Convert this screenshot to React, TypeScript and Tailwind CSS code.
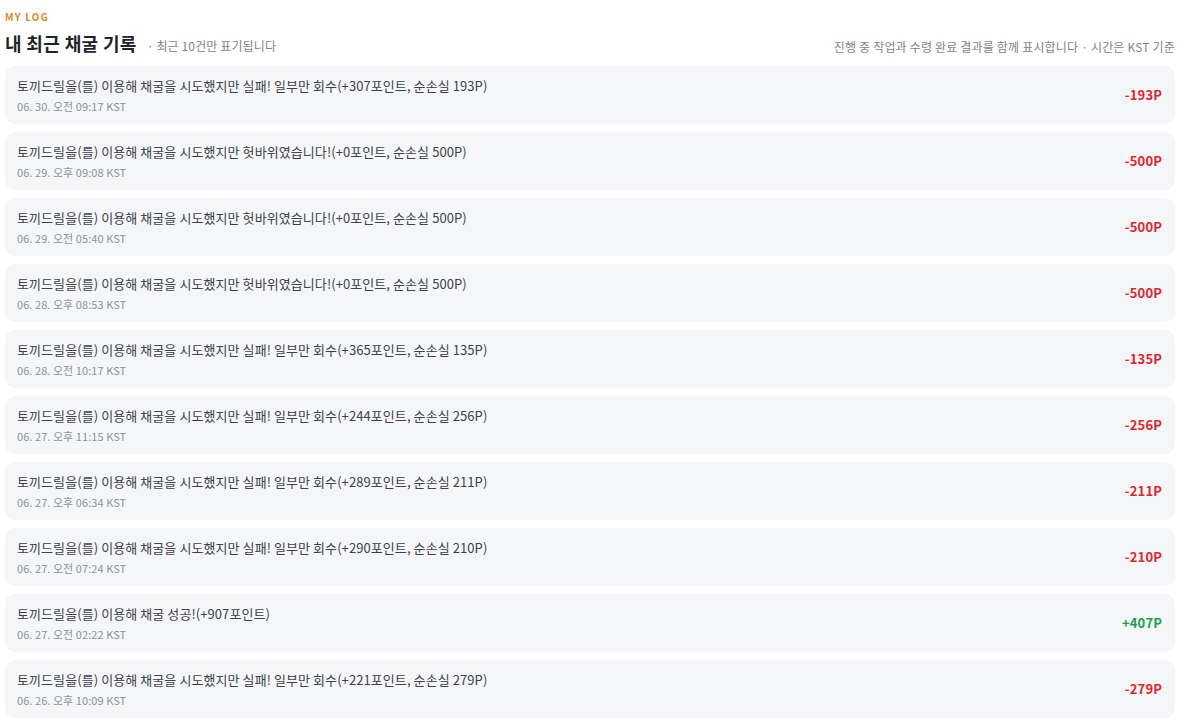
import React from "react";

const rows = [
  { text: "토끼드릴을(를) 이용해 채굴을 시도했지만 실패! 일부만 회수(+307포인트, 순손실 193P)", date: "06. 30. 오전 09:17 KST", amt: "-193P", pos: false },
  { text: "토끼드릴을(를) 이용해 채굴을 시도했지만 헛바위였습니다!(+0포인트, 순손실 500P)", date: "06. 29. 오후 09:08 KST", amt: "-500P", pos: false },
  { text: "토끼드릴을(를) 이용해 채굴을 시도했지만 헛바위였습니다!(+0포인트, 순손실 500P)", date: "06. 29. 오전 05:40 KST", amt: "-500P", pos: false },
  { text: "토끼드릴을(를) 이용해 채굴을 시도했지만 헛바위였습니다!(+0포인트, 순손실 500P)", date: "06. 28. 오후 08:53 KST", amt: "-500P", pos: false },
  { text: "토끼드릴을(를) 이용해 채굴을 시도했지만 실패! 일부만 회수(+365포인트, 순손실 135P)", date: "06. 28. 오전 10:17 KST", amt: "-135P", pos: false },
  { text: "토끼드릴을(를) 이용해 채굴을 시도했지만 실패! 일부만 회수(+244포인트, 순손실 256P)", date: "06. 27. 오후 11:15 KST", amt: "-256P", pos: false },
  { text: "토끼드릴을(를) 이용해 채굴을 시도했지만 실패! 일부만 회수(+289포인트, 순손실 211P)", date: "06. 27. 오후 06:34 KST", amt: "-211P", pos: false },
  { text: "토끼드릴을(를) 이용해 채굴을 시도했지만 실패! 일부만 회수(+290포인트, 순손실 210P)", date: "06. 27. 오전 07:24 KST", amt: "-210P", pos: false },
  { text: "토끼드릴을(를) 이용해 채굴 성공!(+907포인트)", date: "06. 27. 오전 02:22 KST", amt: "+407P", pos: true },
  { text: "토끼드릴을(를) 이용해 채굴을 시도했지만 실패! 일부만 회수(+221포인트, 순손실 279P)", date: "06. 26. 오후 10:09 KST", amt: "-279P", pos: false },
];

export default function App() {
  return (
    <div
      className="bg-white pl-[5px] pr-[3px] pt-[10px] min-h-[723px]"
      style={{ fontFamily: '"Noto Sans CJK KR", "Noto Sans", sans-serif' }}
    >
      <div className="text-[10px] leading-[14px] font-bold tracking-[0.12em] text-[#e08a1e]">MY LOG</div>
      <div className="mt-[6px] mb-[10px] flex items-end justify-between">
        <div className="flex items-baseline gap-[10px]">
          <h2 className="text-[18px] leading-[26px] font-bold text-[#1f2328] tracking-[0.02em]">내 최근 채굴 기록</h2>
          <span className="text-[12px] text-[#7b8590] tracking-[0.01em]">· 최근 10건만 표기됩니다</span>
        </div>
        <div className="text-[12px] leading-[18px] text-[#7b8590] tracking-[0.015em]">
          진행 중 작업과 수령 완료 결과를 함께 표시합니다 · 시간은 KST 기준
        </div>
      </div>
      <div className="flex flex-col gap-[8px]">
        {rows.map((r, i) => (
          <div key={i} className="flex items-center justify-between rounded-[10px] bg-[#f5f6f8] pl-[12px] pr-[13px] pt-[10px] pb-[10px]">
            <div className="flex flex-col gap-[2px]">
              <div className="text-[13px] leading-[20px] text-[#3d4248] tracking-[0.08px]">{r.text}</div>
              <div className="text-[11px] leading-[16px] text-[#8b939c] tracking-[0.06px]">{r.date}</div>
            </div>
            <div className={`text-[13px] font-bold tracking-[0.01em] ${r.pos ? "text-[#16a34a]" : "text-[#e3232d]"}`}>{r.amt}</div>
          </div>
        ))}
      </div>
    </div>
  );
}
